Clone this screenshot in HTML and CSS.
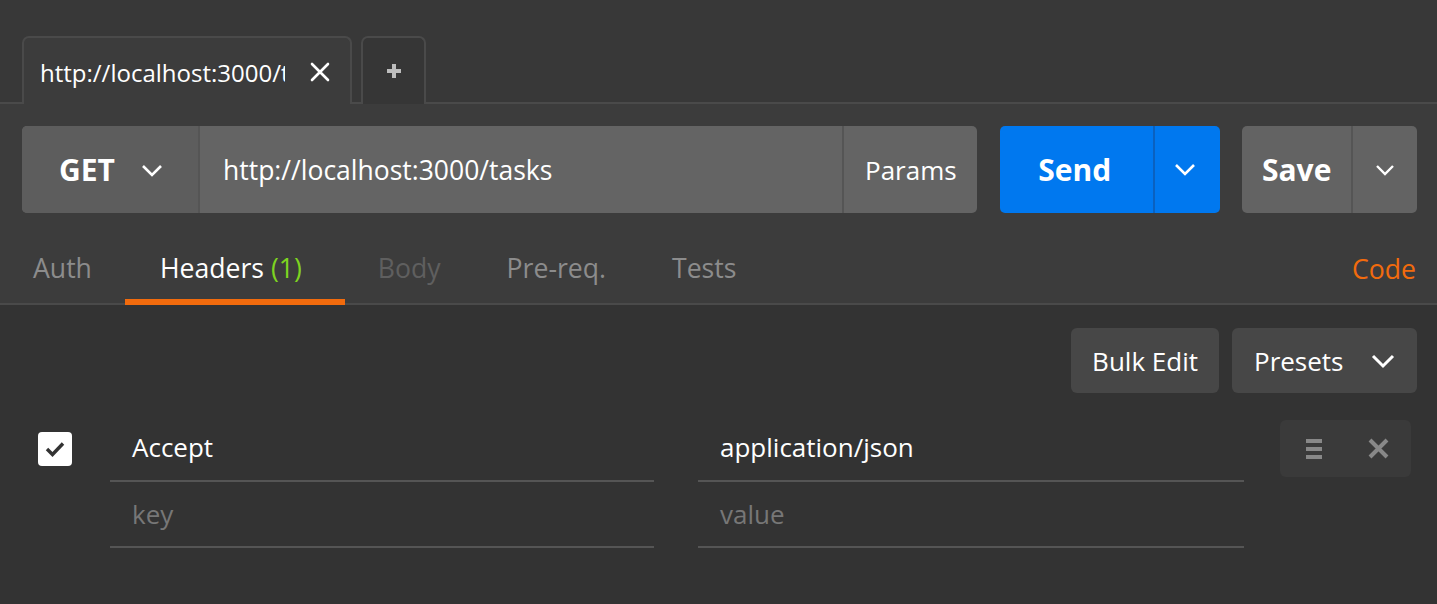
FILE: index.html
```html
<!DOCTYPE html>
<html>
<head>
<meta charset="utf-8">
<link rel="stylesheet" href="styles.css">
</head>
<body>
<div class="app">
  <div class="tabbar">
    <div class="tab active">
      <span class="tab-title">http://localhost:3000/tasks</span>
      <svg class="tab-close" width="20" height="20" viewBox="0 0 20 20"><path d="M2 2L18 18M18 2L2 18" stroke="#fff" stroke-width="2.6" stroke-linecap="round"/></svg>
    </div>
    <div class="tab add">
      <svg width="16" height="16" viewBox="0 0 16 16"><path d="M8 1V15M1 8H15" stroke="#bdbdbd" stroke-width="4"/></svg>
    </div>
  </div>

  <div class="reqbar">
    <div class="urlgroup">
      <div class="method">GET
        <svg class="chev" width="22" height="14" viewBox="0 0 22 14"><path d="M2 2L11 11L20 2" stroke="#fff" stroke-width="2.6" fill="none"/></svg>
      </div>
      <div class="url">http://localhost:3000/tasks</div>
      <div class="params">Params</div>
    </div>
    <div class="btn send">
      <span class="main">Send</span>
      <span class="drop"><svg width="22" height="14" viewBox="0 0 22 14"><path d="M2 2L11 11L20 2" stroke="#fff" stroke-width="2.6" fill="none"/></svg></span>
    </div>
    <div class="btn save">
      <span class="main">Save</span>
      <span class="drop"><svg width="20" height="12" viewBox="0 0 20 12"><path d="M2 2L10 10L18 2" stroke="#fff" stroke-width="2.4" fill="none"/></svg></span>
    </div>
  </div>

  <div class="subtabs">
    <div class="st">Auth</div>
    <div class="st active">Headers <span class="count">(1)</span></div>
    <div class="st disabled">Body</div>
    <div class="st">Pre-req.</div>
    <div class="st">Tests</div>
    <div class="spacer"></div>
    <div class="code">Code</div>
  </div>

  <div class="content">
    <div class="toolbar">
      <div class="tbtn">Bulk Edit</div>
      <div class="tbtn presets">Presets
        <svg width="24" height="16" viewBox="0 0 24 16"><path d="M2 3L12 13L22 3" stroke="#fff" stroke-width="3" fill="none"/></svg>
      </div>
    </div>
    <div class="hrow first">
      <div class="cbcell">
        <div class="checkbox"><svg width="20" height="16" viewBox="0 0 20 16"><path d="M2 8L7.5 13.5L18 2.5" stroke="#333" stroke-width="3.4" fill="none"/></svg></div>
      </div>
      <div class="field key">Accept</div>
      <div class="field val">application/json</div>
      <div class="actions">
        <svg width="16" height="22" viewBox="0 0 16 22"><rect x="0" y="1" width="16" height="4" fill="#888"/><rect x="0" y="9" width="16" height="4" fill="#888"/><rect x="0" y="17" width="16" height="4" fill="#888"/></svg>
        <svg width="21" height="21" viewBox="0 0 21 21"><path d="M2 2L19 19M19 2L2 19" stroke="#888" stroke-width="4"/></svg>
      </div>
    </div>
    <div class="hrow second">
      <div class="cbcell"></div>
      <div class="field key ph">key</div>
      <div class="field val ph">value</div>
    </div>
  </div>
</div>
</body>
</html>
```

FILE: styles.css
```css
* { box-sizing: border-box; }
html, body { margin: 0; padding: 0; }
body {
  background: #333333;
  font-family: "Open Sans", "Liberation Sans", sans-serif;
  color: #fff;
  width: 1437px;
  height: 604px;
  overflow: hidden;
}
.app { display: flex; flex-direction: column; }

.tabbar {
  background: #383838;
  height: 104px;
  padding: 36px 0 0 22px;
  display: flex;
  gap: 9px;
  border-bottom: 2px solid #4a4a4a;
}
.tab {
  height: 68px;
  border: 2px solid #4a4a4a;
  border-bottom: none;
  border-radius: 7px 7px 0 0;
  display: flex;
  align-items: center;
}
.tab.active {
  width: 330px;
  background: #3c3c3c;
  padding: 0 20px 0 16px;
  margin-bottom: -2px;
  height: 70px;
}
.tab-title {
  width: 245px;
  overflow: hidden;
  white-space: nowrap;
  text-overflow: clip;
  font-size: 24px;
  color: #fff;
}
.tab-close { margin-left: 25px; }
.tab.add {
  width: 65px;
  justify-content: center;
  background: #363636;
}

.reqbar {
  background: #3c3c3c;
  display: flex;
  padding: 22px 20px 0 22px;
  height: 109px;
}
.urlgroup {
  width: 956px;
  height: 87px;
  display: flex;
  border-radius: 5px;
  overflow: hidden;
  background: #646464;
}
.method {
  width: 178px;
  background: #5d5d5d;
  display: flex;
  align-items: center;
  padding-left: 37px;
  font-size: 30px;
  font-weight: 700;
  border-right: 2px solid #555;
}
.method .chev { margin-left: 26px; margin-top: 2px; }
.url {
  flex: 1;
  display: flex;
  align-items: center;
  padding-left: 23px;
  font-size: 26.5px;
  color: #fff;
}
.params {
  width: 135px;
  display: flex;
  align-items: center;
  justify-content: center;
  font-size: 26px;
  border-left: 2px solid #555;
}
.btn {
  height: 87px;
  display: flex;
  border-radius: 5px;
  overflow: hidden;
  font-weight: 700;
  font-size: 30px;
}
.btn .main { display: flex; align-items: center; justify-content: center; }
.btn .drop { display: flex; align-items: center; justify-content: center; }
.send { margin-left: 23px; width: 220px; background: #0078ef; }
.send .main { width: 153px; padding-right: 4px; }
.send .drop { flex: 1; border-left: 2px solid #0a61bf; padding-right: 6px; }
.save { margin-left: 22px; width: 175px; background: #636363; }
.save .main { width: 109px; }
.save .drop { flex: 1; border-left: 2px solid #555; }

.subtabs {
  background: #3c3c3c;
  height: 92px;
  display: flex;
  padding: 0 21px 0 0;
  border-bottom: 2px solid #4a4a4a;
}
.st {
  font-size: 26.6px;
  color: #8c8c8c;
  padding: 41px 33px 17px;
  display: flex;
  align-items: center;
  height: 92px;
  border-bottom: 6px solid transparent;
  margin-bottom: -2px;
  white-space: pre;
}
.st:first-child { padding-left: 33px; }
.st.active { color: #fff; border-bottom-color: #f26b0d; padding-left: 35px; padding-right: 43px; }
.st.active .count { color: #7ed321; }
.st.disabled { color: #5f5f5f; }
.spacer { flex: 1; }
.code {
  font-size: 26.6px;
  color: #f26b0d;
  display: flex;
  align-items: center;
  padding-top: 40px;
  padding-bottom: 18px;
}

.content {
  padding: 23px 20px 0 38px;
}
.toolbar {
  display: flex;
  justify-content: flex-end;
  gap: 13px;
  margin-bottom: 26px;
}
.tbtn {
  height: 65px;
  background: #474747;
  border-radius: 6px;
  font-size: 26px;
  display: flex;
  align-items: center;
  padding: 0 21px;
}
.tbtn.presets { width: 185px; padding-left: 22px; justify-content: space-between; padding-right: 22px; }

.hrow {
  display: flex;
  align-items: flex-start;
}
.cbcell { width: 72px; padding-top: 13px; }
.checkbox {
  width: 34px;
  height: 34px;
  background: #fff;
  border-radius: 4px;
  display: flex;
  align-items: center;
  justify-content: center;
}
.field {
  border-bottom: 2px solid #555;
  font-size: 26px;
  color: #fff;
  padding-left: 22px;
}
.first .field { height: 63px; padding-top: 10px; }
.second .field { height: 66px; padding-top: 14px; }
.field.key { width: 544px; }
.field.val { width: 546px; margin-left: 44px; }
.field.ph { color: #777; }
.actions {
  width: 131px;
  height: 57px;
  margin-left: 36px;
  margin-top: 1px;
  background: #3a3a3a;
  border-radius: 6px;
  display: flex;
  align-items: center;
  justify-content: space-between;
  padding: 0 22px 0 26px;
}
```
